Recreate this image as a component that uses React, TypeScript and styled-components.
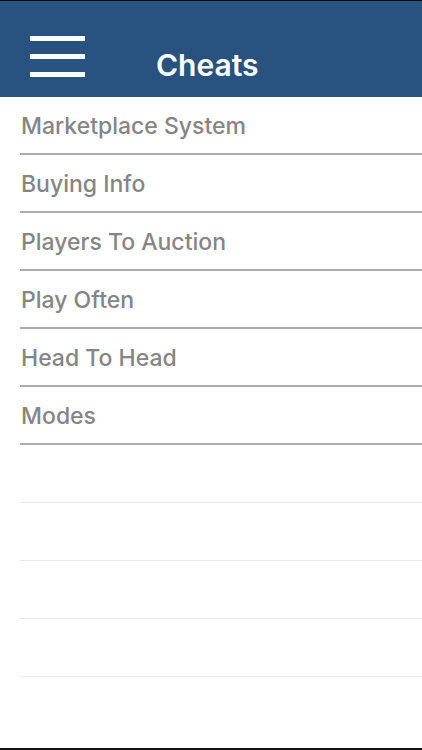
import React from "react";
import styled, { createGlobalStyle } from "styled-components";

const GlobalStyle = createGlobalStyle`
  html, body { margin: 0; padding: 0; background: #000; }
  * { box-sizing: border-box; }
`;

const Screen = styled.div`
  width: 422px;
  height: 750px;
  display: flex;
  flex-direction: column;
  background: #fff;
  border-top: 1px solid #000;
  border-bottom: 2px solid #111;
  overflow: hidden;
  font-family: Inter, "Liberation Sans", Arial, sans-serif;
`;

const Header = styled.header`
  height: 96px;
  flex: none;
  background: #28527f;
  display: flex;
  align-items: flex-start;
  padding: 35px 0 0 30px;
`;

const MenuButton = styled.button`
  width: 55px;
  height: 41px;
  padding: 0;
  margin: 0;
  border: none;
  background: transparent;
  display: flex;
  flex-direction: column;
  justify-content: space-between;
  cursor: pointer;
`;

const Bar = styled.span`
  display: block;
  width: 55px;
  height: 5px;
  background: #fff;
`;

const Title = styled.h1`
  margin: 12px 0 0 71px;
  color: #fff;
  font-size: 30px;
  line-height: 34px;
  font-weight: 600;
  letter-spacing: 0;
`;

const List = styled.ul`
  list-style: none;
  margin: 0;
  padding: 0 0 0 20px;
  flex: 1;
`;

const Row = styled.li<{ $empty?: boolean }>`
  height: 58px;
  display: flex;
  align-items: center;
  padding: 2px 0 0 1px;
  border-bottom: ${(p) => (p.$empty ? "1px solid #ebebeb" : "2px solid #acacac")};
  color: #858585;
  font-size: 23px;
  font-weight: 500;
`;

const items = [
  "Marketplace System",
  "Buying Info",
  "Players To Auction",
  "Play Often",
  "Head To Head",
  "Modes",
];

export default function App() {
  return (
    <>
      <GlobalStyle />
      <Screen>
        <Header>
          <MenuButton aria-label="Menu">
            <Bar />
            <Bar />
            <Bar />
          </MenuButton>
          <Title>Cheats</Title>
        </Header>
        <List>
          {items.map((t) => (
            <Row key={t}>{t}</Row>
          ))}
          {[0, 1, 2, 3].map((i) => (
            <Row key={"e" + i} $empty />
          ))}
        </List>
      </Screen>
    </>
  );
}
